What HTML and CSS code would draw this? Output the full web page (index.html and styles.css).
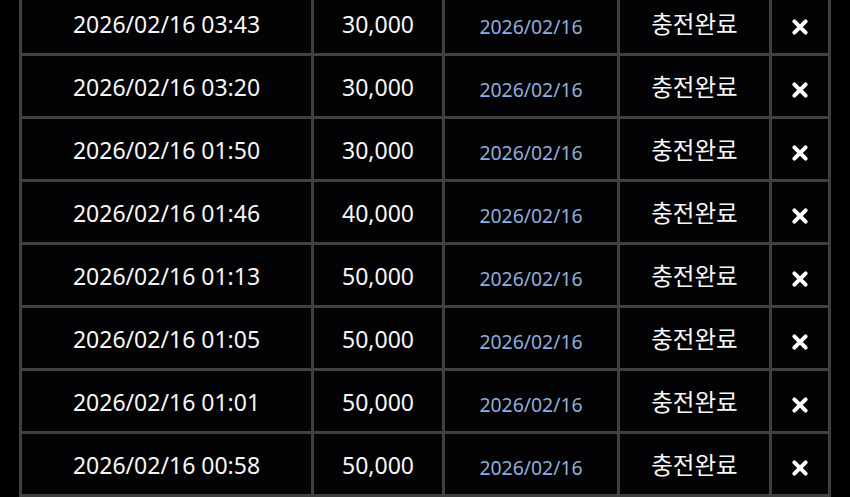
FILE: index.html
```html
<!DOCTYPE html>
<html lang="ko">
<head>
<meta charset="utf-8">
<link rel="stylesheet" href="styles.css">
</head>
<body>
<div class="grid">
  <div class="cell dt">2026/02/16 03:43</div><div class="cell amt">30,000</div><div class="cell day">2026/02/16</div><div class="cell st">충전완료</div><div class="cell del"><svg viewBox="0 0 16 16"><path d="M3 3L13 13M13 3L3 13"/></svg></div>
  <div class="cell dt">2026/02/16 03:20</div><div class="cell amt">30,000</div><div class="cell day">2026/02/16</div><div class="cell st">충전완료</div><div class="cell del"><svg viewBox="0 0 16 16"><path d="M3 3L13 13M13 3L3 13"/></svg></div>
  <div class="cell dt">2026/02/16 01:50</div><div class="cell amt">30,000</div><div class="cell day">2026/02/16</div><div class="cell st">충전완료</div><div class="cell del"><svg viewBox="0 0 16 16"><path d="M3 3L13 13M13 3L3 13"/></svg></div>
  <div class="cell dt">2026/02/16 01:46</div><div class="cell amt">40,000</div><div class="cell day">2026/02/16</div><div class="cell st">충전완료</div><div class="cell del"><svg viewBox="0 0 16 16"><path d="M3 3L13 13M13 3L3 13"/></svg></div>
  <div class="cell dt">2026/02/16 01:13</div><div class="cell amt">50,000</div><div class="cell day">2026/02/16</div><div class="cell st">충전완료</div><div class="cell del"><svg viewBox="0 0 16 16"><path d="M3 3L13 13M13 3L3 13"/></svg></div>
  <div class="cell dt">2026/02/16 01:05</div><div class="cell amt">50,000</div><div class="cell day">2026/02/16</div><div class="cell st">충전완료</div><div class="cell del"><svg viewBox="0 0 16 16"><path d="M3 3L13 13M13 3L3 13"/></svg></div>
  <div class="cell dt">2026/02/16 01:01</div><div class="cell amt">50,000</div><div class="cell day">2026/02/16</div><div class="cell st">충전완료</div><div class="cell del"><svg viewBox="0 0 16 16"><path d="M3 3L13 13M13 3L3 13"/></svg></div>
  <div class="cell dt">2026/02/16 00:58</div><div class="cell amt">50,000</div><div class="cell day">2026/02/16</div><div class="cell st">충전완료</div><div class="cell del"><svg viewBox="0 0 16 16"><path d="M3 3L13 13M13 3L3 13"/></svg></div>
</div>
</body>
</html>
```

FILE: styles.css
```css
html, body {
  margin: 0;
  padding: 0;
  background: #000;
  overflow: hidden;
}
body {
  height: 497px;
  font-family: "Noto Sans", "Noto Sans CJK KR", sans-serif;
  color: #f7f7f7;
}
.grid {
  display: grid;
  grid-template-columns: 289px 128px 172px 149px 56px;
  grid-auto-rows: 60px;
  gap: 3px;
  padding: 3px;
  background: #404040;
  margin: -10px 0 0 19px;
  width: max-content;
}
.cell {
  background: #030204;
  display: flex;
  align-items: center;
  justify-content: center;
  font-size: 23px;
  line-height: 1;
}
.dt, .amt {
  padding-top: 2px;
}
.day {
  color: #8eaedc;
  font-size: 19.4px;
  padding-top: 8px;
}
.st {
  font-family: "Noto Sans CJK KR", sans-serif;
  font-size: 23.5px;
  padding-top: 1px;
}
.del {
  padding-top: 8px;
}
.del svg {
  width: 18px;
  height: 18px;
  fill: none;
  stroke: #fff;
  stroke-width: 3.6;
  stroke-linecap: round;
}
```
